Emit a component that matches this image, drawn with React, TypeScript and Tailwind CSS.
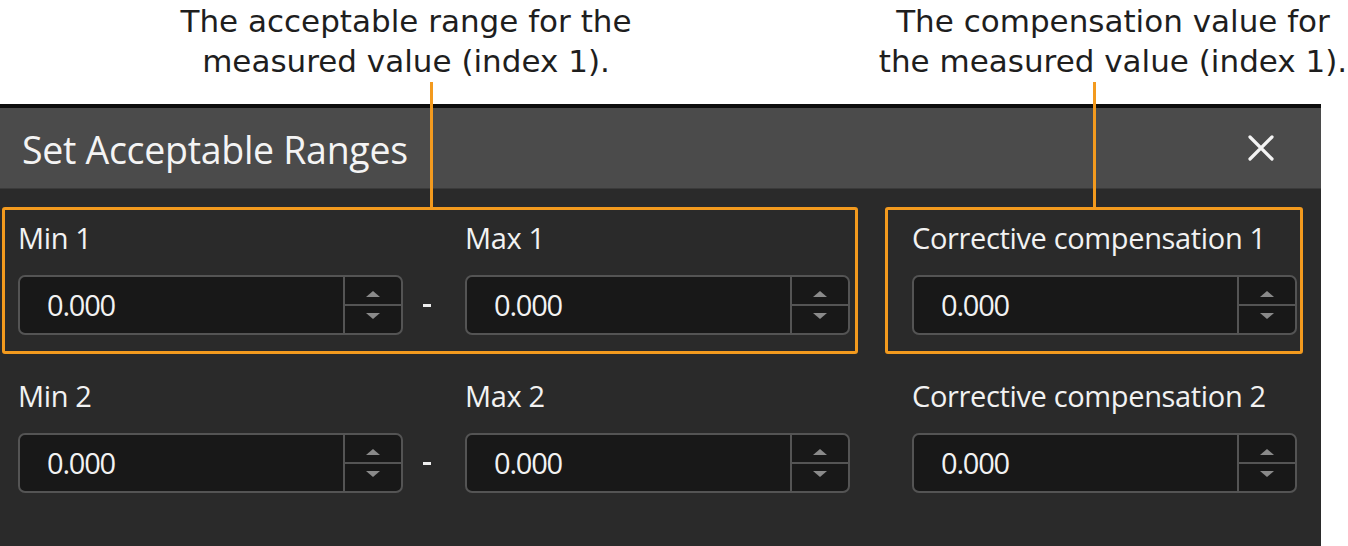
import React from 'react';

const ui = { fontFamily: '"Open Sans", "Noto Sans", sans-serif' };
const note = { fontFamily: '"DejaVu Sans", "Noto Sans", sans-serif' };

const SpinInput: React.FC<{ value: string }> = ({ value }) => (
  <div className="flex h-[60px] w-[385px] rounded-[7px] border-2 border-[#545454] bg-[#181818] overflow-hidden">
    <div className="flex-1 flex items-center pl-[27px] text-[29px] text-[#f2f2f2] tracking-[-1.2px]">{value}</div>
    <div className="w-[58px] flex flex-col border-l-2 border-[#545454]">
      <div className="flex-1 flex items-end justify-center pb-[7px] border-b-2 border-[#545454]">
        <div className="w-0 h-0 border-l-[7px] border-r-[7px] border-b-[6px] border-l-transparent border-r-transparent border-b-[#8a8a8a]" />
      </div>
      <div className="flex-1 flex items-start justify-center pt-[7px]">
        <div className="w-0 h-0 border-l-[7px] border-r-[7px] border-t-[6px] border-l-transparent border-r-transparent border-t-[#8a8a8a]" />
      </div>
    </div>
  </div>
);

const Field: React.FC<{ label: string }> = ({ label }) => (
  <div className="flex flex-col">
    <div className="h-[36px] leading-[36px] text-[29px] text-[#f2f2f2] tracking-[-0.35px]">{label}</div>
    <div className="mt-[19px]">
      <SpinInput value="0.000" />
    </div>
  </div>
);

const Row: React.FC<{ n: number; highlight?: boolean }> = ({ n, highlight }) => {
  const box = highlight ? 'border-[#f39a1e]' : 'border-transparent';
  return (
    <div className="flex">
      <div className={`ml-[2px] w-[856px] flex items-end border-[3px] rounded-[3px] pt-[10px] pb-[16px] pl-[13px] ${box}`}>
        <Field label={`Min ${n}`} />
        <div className="w-[62px] h-[60px] flex items-center justify-center pr-[14px]">
          <div className="w-[8px] h-[3px] bg-[#eeeeee]" />
        </div>
        <Field label={`Max ${n}`} />
      </div>
      <div className={`ml-[27px] w-[418px] flex border-[3px] rounded-[3px] pt-[10px] pb-[16px] pl-[24px] ${box}`}>
        <Field label={`Corrective compensation ${n}`} />
      </div>
    </div>
  );
};

export default function App() {
  return (
    <div className="relative w-[1348px] h-[546px] bg-white overflow-hidden" style={ui}>
      {/* annotations */}
      <div className="h-[104px] flex text-[#1e1e1e] text-[31px] leading-[40px]" style={note}>
        <div className="shrink-0 ml-[146px] w-[520px] pt-[1px] text-center">
          The acceptable range for the<br />measured value (index 1).
        </div>
        <div className="shrink-0 ml-[207px] w-[480px] pt-[1px] text-center whitespace-nowrap">
          The compensation value for<br />the measured value (index 1).
        </div>
      </div>

      {/* dialog */}
      <div className="w-[1321px] h-[442px] flex flex-col">
        <div className="h-[4px] bg-[#0e0e0e]" />
        <div className="h-[81px] bg-[#4b4b4b] flex items-center justify-between pl-[22px] pr-[46px] border-b border-[#3a3a3a]">
          <span className="text-[37.5px] text-[#f4f4f4] tracking-[-0.3px] pt-[4px]">Set Acceptable Ranges</span>
          <svg width="28" height="28" viewBox="0 0 28 28" className="mb-[1px]">
            <path d="M3 3 L25 25 M25 3 L3 25" stroke="#f4f4f4" strokeWidth="3.2" strokeLinecap="round" />
          </svg>
        </div>
        <div className="flex-1 bg-[#2a2a2a] pt-[18px] flex flex-col gap-[11px]">
          <Row n={1} highlight />
          <Row n={2} />
        </div>
      </div>

      {/* callout lines */}
      <div className="absolute left-[430px] top-[82px] w-[3px] h-[126px] bg-[#f39a1e]" />
      <div className="absolute left-[1093px] top-[82px] w-[3px] h-[126px] bg-[#f39a1e]" />
    </div>
  );
}
